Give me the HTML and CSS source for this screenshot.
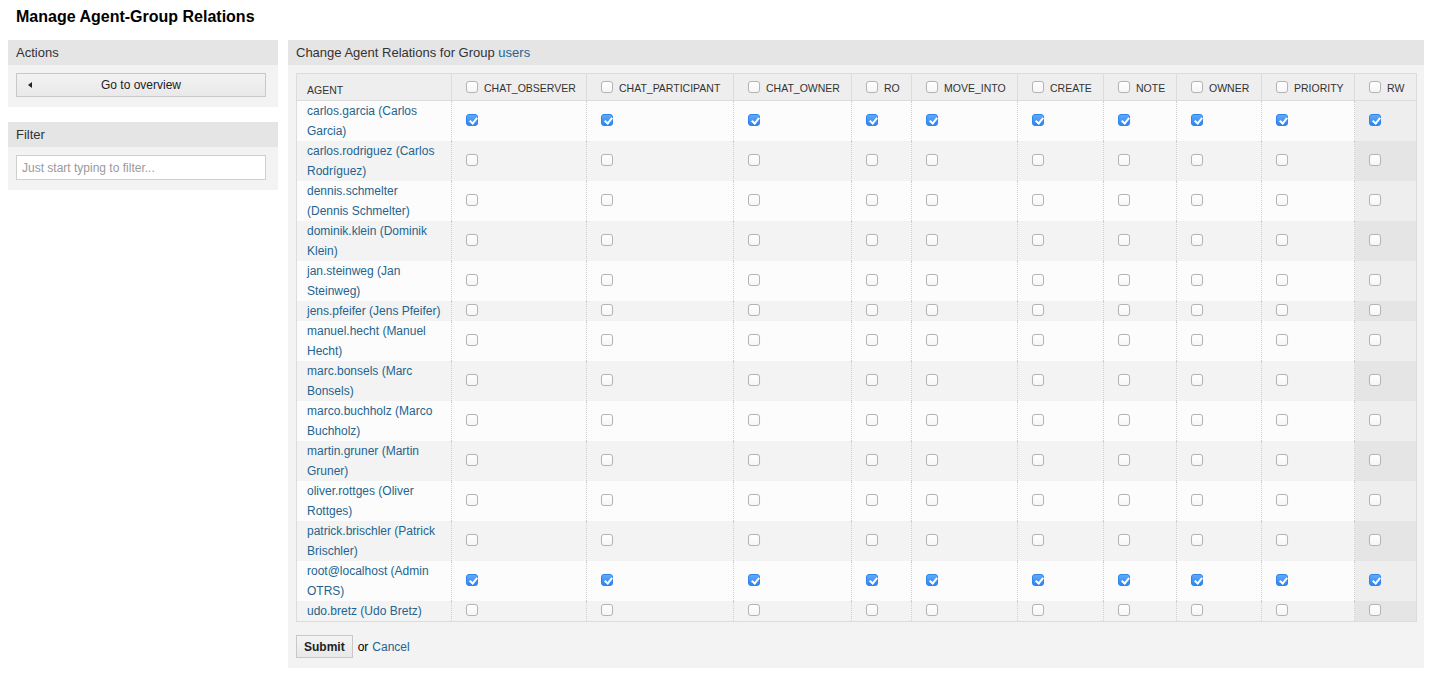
FILE: index.html
```html
<!DOCTYPE html>
<html lang="en">
<head>
<meta charset="utf-8">
<title>Manage Agent-Group Relations</title>
<link rel="stylesheet" href="styles.css">
</head>
<body>
<h1 class="page-title">Manage Agent-Group Relations</h1>
<div class="layout">
  <aside class="sidebar">
    <section class="box">
      <h2 class="box-head">Actions</h2>
      <div class="box-body">
        <a class="btn-overview" href="#"><span class="tri"></span>Go to overview</a>
      </div>
    </section>
    <section class="box box-filter">
      <h2 class="box-head">Filter</h2>
      <div class="box-body">
        <input class="filter-input" type="text" placeholder="Just start typing to filter...">
      </div>
    </section>
  </aside>
  <main class="content box">
    <h2 class="box-head">Change Agent Relations for Group <a href="#">users</a></h2>
    <div class="box-body content-body">
      <table class="rel-table">
        <colgroup>
          <col style="width:155px"><col style="width:135px"><col style="width:147px"><col style="width:118px"><col style="width:60px"><col style="width:106px"><col style="width:86px"><col style="width:73px"><col style="width:85px"><col style="width:93px"><col style="width:62px">
        </colgroup>
        <thead>
          <tr>
            <th class="th-agent">AGENT</th>
            <th><label class="hl"><input type="checkbox" class="cb"><span>CHAT_OBSERVER</span></label></th>
            <th><label class="hl"><input type="checkbox" class="cb"><span>CHAT_PARTICIPANT</span></label></th>
            <th><label class="hl"><input type="checkbox" class="cb"><span>CHAT_OWNER</span></label></th>
            <th><label class="hl"><input type="checkbox" class="cb"><span>RO</span></label></th>
            <th><label class="hl"><input type="checkbox" class="cb"><span>MOVE_INTO</span></label></th>
            <th><label class="hl"><input type="checkbox" class="cb"><span>CREATE</span></label></th>
            <th><label class="hl"><input type="checkbox" class="cb"><span>NOTE</span></label></th>
            <th><label class="hl"><input type="checkbox" class="cb"><span>OWNER</span></label></th>
            <th><label class="hl"><input type="checkbox" class="cb"><span>PRIORITY</span></label></th>
            <th><label class="hl"><input type="checkbox" class="cb"><span>RW</span></label></th>
          </tr>
        </thead>
        <tbody id="rows"></tbody>
      </table>
      <div class="form-actions">
        <button class="btn-submit" type="button">Submit</button>
        <span class="or">or</span>
        <a href="#">Cancel</a>
      </div>
    </div>
  </main>
</div>
<script src="app.js"></script>
</body>
</html>
```
FILE: app.js
```js
(function () {
  var agents = [
    ["carlos.garcia (Carlos Garcia)", true],
    ["carlos.rodriguez (Carlos Rodríguez)", false],
    ["dennis.schmelter (Dennis Schmelter)", false],
    ["dominik.klein (Dominik Klein)", false],
    ["jan.steinweg (Jan Steinweg)", false],
    ["jens.pfeifer (Jens Pfeifer)", false],
    ["manuel.hecht (Manuel Hecht)", false],
    ["marc.bonsels (Marc Bonsels)", false],
    ["marco.buchholz (Marco Buchholz)", false],
    ["martin.gruner (Martin Gruner)", false],
    ["oliver.rottges (Oliver Rottges)", false],
    ["patrick.brischler (Patrick Brischler)", false],
    ["root@localhost (Admin OTRS)", true],
    ["udo.bretz (Udo Bretz)", false]
  ];
  var tbody = document.getElementById("rows");
  agents.forEach(function (a) {
    var tr = document.createElement("tr");
    var td = document.createElement("td");
    td.className = "td-agent";
    var link = document.createElement("a");
    link.href = "#";
    link.textContent = a[0];
    td.appendChild(link);
    tr.appendChild(td);
    for (var i = 0; i < 10; i++) {
      var c = document.createElement("td");
      c.className = i === 9 ? "td-cb sorted" : "td-cb";
      var inp = document.createElement("input");
      inp.type = "checkbox";
      inp.className = "cb";
      inp.checked = a[1];
      c.appendChild(inp);
      tr.appendChild(c);
    }
    tbody.appendChild(tr);
  });
})();
```
FILE: styles.css
```css
* { box-sizing: border-box; }
html, body { background: #fff; }
body {
  margin: 8px;
  font-family: "Liberation Sans", Arial, Helvetica, sans-serif;
  font-size: 12px;
  color: #333;
}
a { color: #24648f; text-decoration: none; }

.page-title {
  margin: 0 0 14px;
  padding: 0 8px;
  font-size: 16px;
  line-height: 18px;
  font-weight: bold;
  color: #000;
}

.layout {
  display: flex;
  align-items: flex-start;
  gap: 10px;
  margin-right: 8px;
}
.sidebar { width: 270px; flex: none; }
.content { flex: 1; min-width: 0; }

.box-head {
  margin: 0;
  height: 25px;
  line-height: 25px;
  padding: 0 8px;
  background: #e5e5e5;
  font-size: 13px;
  font-weight: normal;
  color: #333;
}
.box-body {
  background: #f3f3f3;
  padding: 8px 12px 10px 8px;
}
.box-filter { margin-top: 15px; }

.btn-overview {
  position: relative;
  display: block;
  height: 24px;
  line-height: 22px;
  border: 1px solid #c8c8c8;
  background: linear-gradient(#f2f2f2, #e9e9e9);
  color: #222;
  text-align: center;
  font-size: 12px;
}
.tri {
  position: absolute;
  left: 11px;
  top: 8px;
  width: 0; height: 0;
  border-top: 3.5px solid transparent;
  border-bottom: 3.5px solid transparent;
  border-right: 4px solid #222;
}

.filter-input {
  display: block;
  width: 100%;
  height: 25px;
  border: 1px solid #cfcfcf;
  background: #fff;
  padding: 0 5px;
  font-family: inherit;
  font-size: 12px;
  color: #333;
}
.filter-input::placeholder { color: #9a9a9a; }

.content-body { padding: 8px 8px 10px; }

.rel-table {
  table-layout: fixed;
  width: 1120px;
  border-collapse: collapse;
  border: 1px solid #dcdcdc;
}
.rel-table th {
  height: 27px;
  padding: 0 10px;
  background: #eee;
  border: 1px solid #dcdcdc;
  font-weight: normal;
  text-align: left;
  vertical-align: middle;
  font-size: 10.5px;
  color: #333;
  white-space: nowrap;
}
.rel-table th.th-agent {
  vertical-align: bottom;
  padding-bottom: 3px;
  line-height: 14px;
}
.hl {
  display: flex;
  align-items: center;
  margin-top: -1px;
}
.hl span { margin-left: 6px; line-height: 14px; padding-top: 2px; }

.rel-table td {
  padding: 0 10px;
  line-height: 20px;
  vertical-align: middle;
  border-left: 1px dotted #cfcfcf;
  border-right: 1px dotted #cfcfcf;
}
.rel-table tbody tr:nth-child(odd) td { background: #fcfcfc; }
.rel-table tbody tr:nth-child(even) td { background: #f3f3f3; }
.rel-table tbody tr:nth-child(odd) td.sorted { background: #eeeeee; }
.rel-table tbody tr:nth-child(even) td.sorted { background: #e5e5e5; }
.td-agent { font-size: 12px; }

.cb {
  -webkit-appearance: none;
  appearance: none;
  position: relative;
  display: block;
  width: 12px;
  height: 12px;
  margin: 0 0 0 4px;
  border: 1px solid #b4b4b4;
  border-radius: 3px;
  background: linear-gradient(#ffffff, #f6f6f6);
  box-shadow: 0 0 1px rgba(0,0,0,0.08);
  flex: none;
}
.td-cb .cb { margin-bottom: 2px; }
.cb:checked {
  border-color: #2f85ea;
  background: linear-gradient(#5eaafc, #2d86f2);
}
.cb:checked::after {
  content: "";
  position: absolute;
  left: 3.5px;
  top: 1px;
  width: 3px;
  height: 6px;
  border-right: 2px solid #fff;
  border-bottom: 2px solid #fff;
  transform: rotate(40deg);
}

.form-actions {
  margin-top: 13px;
  display: flex;
  align-items: center;
  gap: 5px;
  font-size: 12px;
}
.btn-submit {
  height: 23px;
  padding: 0 7px;
  border: 1px solid #c8c8c8;
  background: linear-gradient(#f4f4f4, #e8e8e8);
  font-family: inherit;
  font-size: 12px;
  font-weight: bold;
  color: #222;
}
.or { color: #000; }
.form-actions a { margin-left: -1px; }
```
